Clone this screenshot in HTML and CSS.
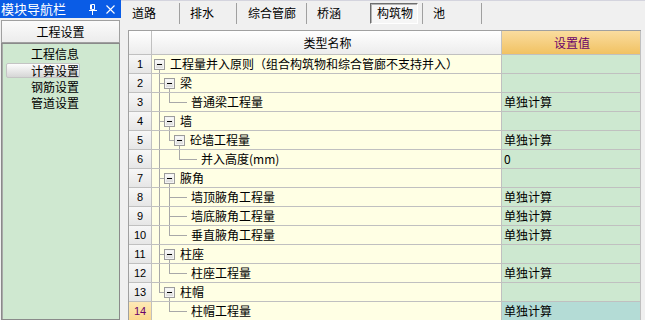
FILE: index.html
```html
<!DOCTYPE html>
<html lang="zh-CN">
<head>
    <meta charset="UTF-8">
    <title>计算设置</title>
    <link rel="stylesheet" href="styles.css">
</head>
<body>
    <div class="app">
        <aside class="nav">
            <div class="nav-title">
                <span>模块导航栏</span>
                <span class="nav-tools">
                    <svg width="8" height="11" viewBox="0 0 8 11"><path d="M2.5 0.5h3v5h-3z M1.5 0.5v5 M0 6.5h8 M3.5 6.5v4.5" fill="none" stroke="#fff" stroke-width="1"/></svg>
                    <svg width="9" height="9" viewBox="0 0 9 9"><path d="M0.5 0.5l8 8 M8.5 0.5l-8 8" stroke="#fff" stroke-width="1.1"/></svg>
                </span>
            </div>
            <div class="nav-head">工程设置</div>
            <ul class="nav-list">
                <li>工程信息</li>
                <li class="active">计算设置</li>
                <li>钢筋设置</li>
                <li>管道设置</li>
            </ul>
        </aside>

        <main class="main">
            <div class="tabs">
                <span class="tab">道路</span>
                <span class="tab">排水</span>
                <span class="tab">综合管廊</span>
                <span class="tab">桥涵</span>
                <span class="tab"><span class="pressed">构筑物</span></span>
                <span class="tab">池</span>
            </div>

            <div class="grid">
                <div class="row head">
                    <div class="num"></div>
                    <div class="name">类型名称</div>
                    <div class="val">设置值</div>
                </div>
                <div class="row">
                    <div class="num">1</div>
                    <div class="name"><i class="box"></i>工程量并入原则（组合构筑物和综合管廊不支持并入）</div>
                    <div class="val"></div>
                </div>
                <div class="row">
                    <div class="num">2</div>
                    <div class="name"><i class="g t"></i><i class="box"></i>梁</div>
                    <div class="val"></div>
                </div>
                <div class="row">
                    <div class="num">3</div>
                    <div class="name"><i class="g v"></i><i class="g l"></i><i class="leaf"></i>普通梁工程量</div>
                    <div class="val">单独计算</div>
                </div>
                <div class="row">
                    <div class="num">4</div>
                    <div class="name"><i class="g t"></i><i class="box"></i>墙</div>
                    <div class="val"></div>
                </div>
                <div class="row">
                    <div class="num">5</div>
                    <div class="name"><i class="g v"></i><i class="g l"></i><i class="box"></i>砼墙工程量</div>
                    <div class="val">单独计算</div>
                </div>
                <div class="row">
                    <div class="num">6</div>
                    <div class="name"><i class="g v"></i><i class="g"></i><i class="g l"></i><i class="leaf"></i>并入高度(mm)</div>
                    <div class="val">0</div>
                </div>
                <div class="row">
                    <div class="num">7</div>
                    <div class="name"><i class="g t"></i><i class="box"></i>腋角</div>
                    <div class="val"></div>
                </div>
                <div class="row">
                    <div class="num">8</div>
                    <div class="name"><i class="g v"></i><i class="g t"></i><i class="leaf"></i>墙顶腋角工程量</div>
                    <div class="val">单独计算</div>
                </div>
                <div class="row">
                    <div class="num">9</div>
                    <div class="name"><i class="g v"></i><i class="g t"></i><i class="leaf"></i>墙底腋角工程量</div>
                    <div class="val">单独计算</div>
                </div>
                <div class="row">
                    <div class="num">10</div>
                    <div class="name"><i class="g v"></i><i class="g l"></i><i class="leaf"></i>垂直腋角工程量</div>
                    <div class="val">单独计算</div>
                </div>
                <div class="row">
                    <div class="num">11</div>
                    <div class="name"><i class="g t"></i><i class="box"></i>柱座</div>
                    <div class="val"></div>
                </div>
                <div class="row">
                    <div class="num">12</div>
                    <div class="name"><i class="g v"></i><i class="g l"></i><i class="leaf"></i>柱座工程量</div>
                    <div class="val">单独计算</div>
                </div>
                <div class="row">
                    <div class="num">13</div>
                    <div class="name"><i class="g l"></i><i class="box"></i>柱帽</div>
                    <div class="val"></div>
                </div>
                <div class="row current">
                    <div class="num">14</div>
                    <div class="name"><i class="g"></i><i class="g l"></i><i class="leaf"></i>柱帽工程量</div>
                    <div class="val">单独计算</div>
                </div>
            </div>
        </main>
    </div>
</body>
</html>
```

FILE: styles.css
```css
* {
    margin: 0;
    padding: 0;
    box-sizing: border-box;
}

body {
    font-family: "Noto Sans CJK SC", "Liberation Sans", sans-serif;
    font-size: 12px;
    color: #000;
    background: #f0f0f0;
    overflow: hidden;
}

.app {
    display: flex;
    height: 320px;
}

/* left navigation */
.nav {
    width: 121px;
    flex: none;
    display: flex;
    flex-direction: column;
}

.nav-title {
    height: 18px;
    background: #0a5ce6;
    color: #fff;
    font-size: 13px;
    line-height: 18px;
    padding-left: 1px;
    display: flex;
    align-items: center;
    justify-content: space-between;
}

.nav-tools {
    display: flex;
    align-items: center;
    gap: 9px;
    padding-right: 6px;
}

.nav-head {
    margin: 2px 1px 0;
    height: 23px;
    border: 1px solid #a0a0a0;
    background: linear-gradient(#fbfbfb, #ececec);
    text-align: center;
    line-height: 21px;
}

.nav-list {
    list-style: none;
    flex: 1;
    margin: 0 1px 0 1px;
    background: #cfe8d0;
    border: 1px solid #8a8a8a;
    box-shadow: inset 1px 0 0 #a8a8a8;
    padding-top: 2px;
}

.nav-list li {
    height: 16px;
    line-height: 16px;
    margin-left: 4px;
    width: 74px;
    padding-left: 25px;
    white-space: nowrap;
}

.nav-list li.active {
    height: 15px;
    margin-top: 1px;
    margin-bottom: 1px;
    background: linear-gradient(#fdfdfd, #d6d6d6);
    border: 1px solid #c4c4c4;
    border-radius: 2px;
    line-height: 13px;
    padding-left: 24px;
}

/* right side */
.main {
    flex: 1;
    min-width: 0;
    border-top: 1px solid #d4d4de;
}

.tabs {
    height: 27px;
    display: flex;
    padding: 2px 0 0 4px;
}

.tab {
    height: 21px;
    line-height: 20px;
    border-right: 1px solid #a0a0a0;
    flex: none;
    white-space: nowrap;
}

.tab:nth-child(1) { width: 55px; padding-left: 7px; }
.tab:nth-child(2) { width: 57px; padding-left: 10px; }
.tab:nth-child(3) { width: 70px; padding-left: 11px; }
.tab:nth-child(4) { width: 63px; padding-left: 10px; border-right: 0; }
.tab:nth-child(5) { width: 53px; }
.tab:nth-child(6) { width: 59px; padding-left: 10px; }

.pressed {
    display: block;
    width: 48px;
    height: 21px;
    padding-left: 6px;
    border: 1px solid;
    border-color: #6e6e6e #fff #fff #6e6e6e;
    box-shadow: inset 1px 1px 0 #b4b4b4;
    background: #f6f6f6;
    line-height: 18px;
}

/* tree grid */
.grid {
    margin: 2px 0 0 7px;
    width: 513px;
    border-left: 1px solid #a0a0a0;
    border-top: 1px solid #a0a0a0;
}

.row {
    display: grid;
    grid-template-columns: 23px 350px 139px;
    height: 19px;
}

.row > div {
    border-right: 1px solid #c0c0c0;
    border-bottom: 1px solid #c0c0c0;
    line-height: 18px;
    white-space: nowrap;
    overflow: hidden;
}

.num {
    background: linear-gradient(#f7f7f7, #e6e6e6);
    text-align: center;
    font-family: "Liberation Sans", sans-serif;
    font-size: 11px;
}

.name {
    background: #ffffe4;
    display: flex;
    padding-left: 2px;
}

.val {
    background: #cde8d0;
    padding-left: 2px;
}

.head {
    height: 24px;
}

.head > div {
    line-height: 23px;
    text-align: center;
    justify-content: center;
    background: linear-gradient(#ffffff, #ececec);
}

.head .val {
    background: linear-gradient(#fadc9f, #f1c262);
    color: #6a006a;
}

.current .num {
    background: linear-gradient(#fee9b6, #fbd98e);
    color: #6a006a;
}

.current .val {
    background: #b4dcd6;
}

/* tree guides */
.g {
    width: 10px;
    flex: none;
}

.g.v {
    background: linear-gradient(#a8a8a8, #a8a8a8) 5px 0 / 1px 100% no-repeat;
}

.g.t {
    background:
        linear-gradient(#a8a8a8, #a8a8a8) 5px 0 / 1px 100% no-repeat,
        linear-gradient(#a8a8a8, #a8a8a8) 5px 9px / 5px 1px no-repeat;
}

.g.l {
    background:
        linear-gradient(#a8a8a8, #a8a8a8) 5px 0 / 1px 10px no-repeat,
        linear-gradient(#a8a8a8, #a8a8a8) 5px 9px / 5px 1px no-repeat;
}

.leaf {
    width: 13px;
    flex: none;
    margin-right: 4px;
    background: linear-gradient(#a8a8a8, #a8a8a8) 0 9px / 100% 1px no-repeat;
}

.box {
    position: relative;
    flex: none;
    width: 11px;
    height: 11px;
    margin: 4px 5px 0 0;
    border: 1px solid #9c9c9c;
    background: linear-gradient(#ffffff, #d8d8d8);
    box-shadow: inset 0 0 0 1px #f4f4f4;
}

.box::before {
    content: "";
    position: absolute;
    left: 2px;
    top: 4px;
    width: 5px;
    height: 1px;
    background: #000;
}

.box::after {
    content: "";
    position: absolute;
    left: 4px;
    top: 10px;
    width: 1px;
    height: 4px;
    background: #a8a8a8;
}
```
